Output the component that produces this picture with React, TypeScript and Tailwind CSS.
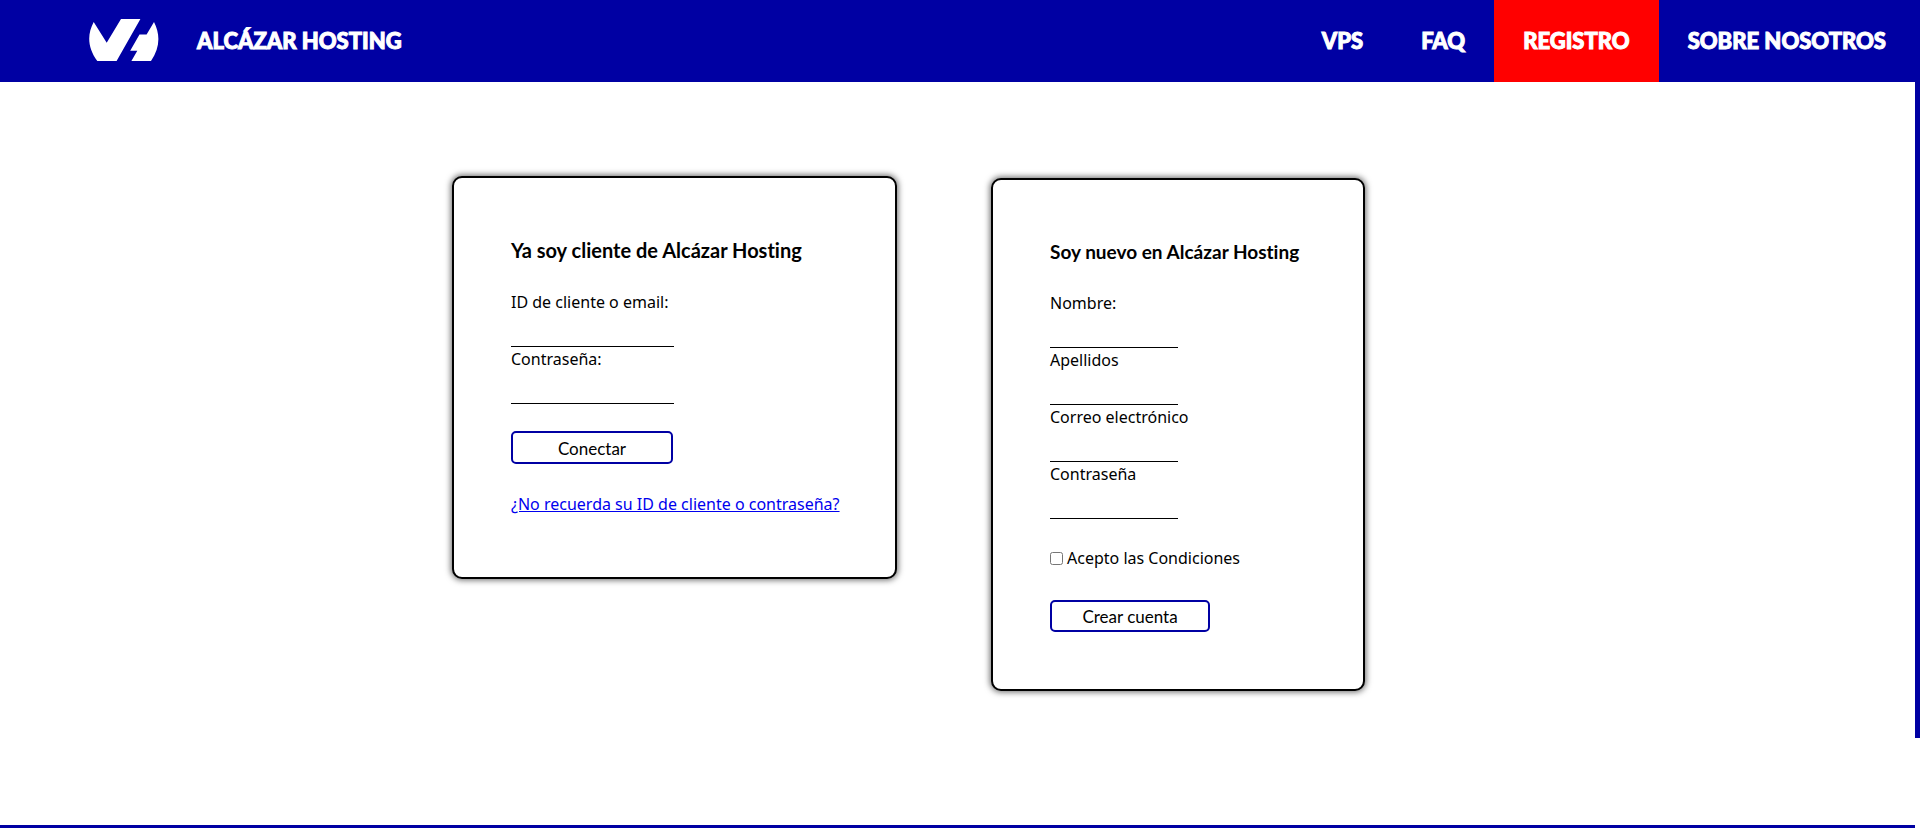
const navItems = [
  { label: "VPS", href: "#vps", active: false },
  { label: "FAQ", href: "#faq", active: false },
  { label: "REGISTRO", href: "#registro", active: true },
  { label: "SOBRE NOSOTROS", href: "#nosotros", active: false },
];

function Logo() {
  return (
    <svg viewBox="0 0 70 42" className="h-[42px] w-[70px]" fill="white" aria-hidden="true">
      <path d="M4.7 3 L17.7 23.7 L32 0 H51.4 L27.6 42 H8.3 C-1.5 29 -2 15.500 4.700 3 Z" />
      <path d="M65 3 C71.500 15.500 71 29 62 42 H42.400 L48.300 31.700 H41.200 L50.500 15.600 H57.600 Z" />
    </svg>
  );
}

function Header() {
  return (
    <header className="flex h-[82px] items-stretch justify-between bg-[#0000a3] pl-[89px] text-[22px] font-black text-white font-[Lato,sans-serif] [-webkit-text-stroke:1px_white]">
      <a href="#inicio" className="flex items-center gap-[38px] pb-[2px]">
        <Logo />
        <span>ALCÁZAR HOSTING</span>
      </a>
      <nav className="flex">
        {navItems.map((item) => (
          <a
            key={item.label}
            href={item.href}
            className={`flex items-center px-[29px] pb-[2px] ${item.active ? "bg-[#ff0000]" : ""}`}
          >
            {item.label}
          </a>
        ))}
      </nav>
    </header>
  );
}

function Field({ id, label, type = "text", width }: { id: string; label: string; type?: string; width: string }) {
  return (
    <div className="flex flex-col items-start">
      <label htmlFor={id} className="leading-6">
        {label}
      </label>
      <input id={id} type={type} className={`h-[33px] border-b border-black bg-transparent outline-none ${width}`} />
    </div>
  );
}

const cardStyle = "max-w-full rounded-[10px] border-2 border-black bg-white px-[57px] shadow-[0_0_6px_1px_rgba(0,0,0,0.6)]";
const headingStyle = "leading-7 font-bold whitespace-nowrap font-[Lato,sans-serif] [font-variant-ligatures:none]";
const buttonStyle = "block rounded-[5px] border-2 border-[#0000a3] bg-white pt-[2px] text-[17px] leading-6 font-[Lato,sans-serif]";

function LoginCard() {
  return (
    <form className={`mt-[94px] w-[445px] pt-[58px] pb-[61px] ${cardStyle}`}>
      <h2 className={`text-[20px] ${headingStyle}`}>Ya soy cliente de Alcázar Hosting</h2>
      <div className="mt-[26px] flex flex-col">
        <Field id="login-id" label="ID de cliente o email:" width="w-[163px]" />
        <Field id="login-password" label="Contraseña:" type="password" width="w-[163px]" />
      </div>
      <button type="button" className={`mt-[27px] h-[33px] w-[162px] ${buttonStyle}`}>
        Conectar
      </button>
      <a href="#recuperar" className="mt-7 block whitespace-nowrap leading-6 text-[#0000ee] underline">
        ¿No recuerda su ID de cliente o contraseña?
      </a>
    </form>
  );
}

function SignupCard() {
  return (
    <form className={`mt-[96px] w-[374px] pt-[58px] pb-[57px] ${cardStyle}`}>
      <h2 className={`text-[19px] ${headingStyle}`}>Soy nuevo en Alcázar Hosting</h2>
      <div className="mt-[25px] flex flex-col">
        <Field id="name" label="Nombre:" width="w-32" />
        <Field id="surname" label="Apellidos" width="w-32" />
        <Field id="email" label="Correo electrónico" type="email" width="w-32" />
        <Field id="password" label="Contraseña" type="password" width="w-32" />
      </div>
      <label className="mt-[27px] flex items-center gap-1 leading-6">
        <input type="checkbox" className="h-[13px] w-[13px]" />
        Acepto las Condiciones
      </label>
      <button type="button" className={`mt-[30px] h-8 w-40 ${buttonStyle}`}>
        Crear cuenta
      </button>
    </form>
  );
}

export default function App() {
  return (
    <div className="flex min-h-screen bg-white text-[16px] text-black font-['Noto_Sans',sans-serif]">
      <div className="flex flex-1 flex-col">
        <Header />
        <main className="flex flex-1 items-start justify-center gap-[94px] pr-[98px] pb-20">
          <LoginCard />
          <SignupCard />
        </main>
        <footer className="h-[3px] bg-[#0000a3]" />
      </div>
      <div className="h-[738px] w-[5px] bg-[#0000a3]" />
    </div>
  );
}
